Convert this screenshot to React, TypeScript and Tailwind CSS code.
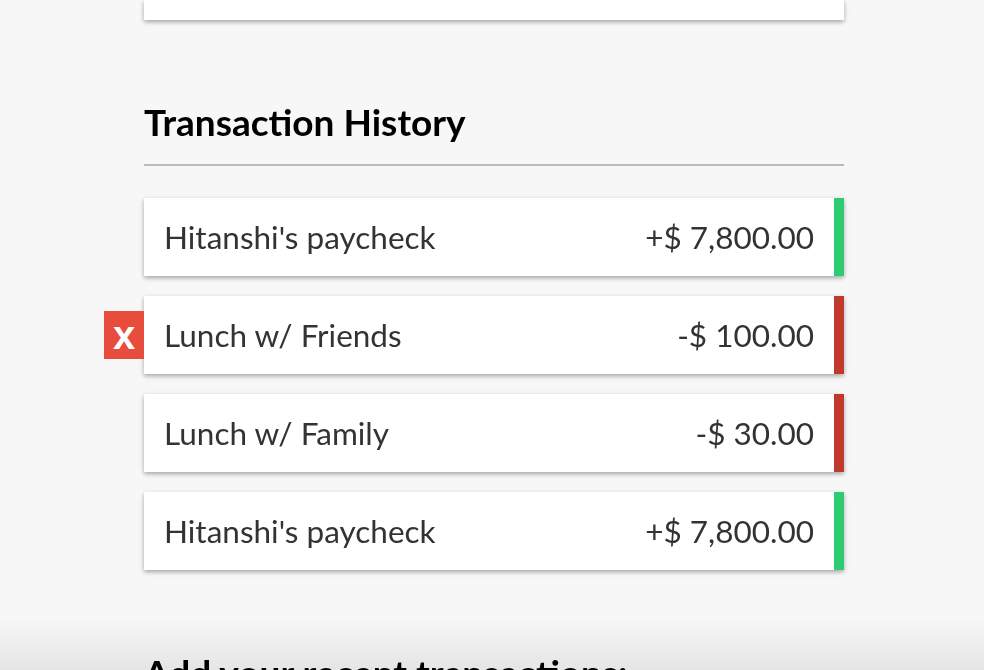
import React from "react";

interface Transaction {
  id: number;
  text: string;
  amount: number;
}

const transactions: Transaction[] = [
  { id: 1, text: "Hitanshi's paycheck", amount: 7800 },
  { id: 2, text: "Lunch w/ Friends", amount: -100 },
  { id: 3, text: "Lunch w/ Family", amount: -30 },
  { id: 4, text: "Hitanshi's paycheck", amount: 7800 },
];

function formatAmount(amount: number) {
  const sign = amount < 0 ? "-" : "+";
  const abs = Math.abs(amount).toLocaleString("en-US", {
    minimumFractionDigits: 2,
    maximumFractionDigits: 2,
  });
  return `${sign}$ ${abs}`;
}

export default function App() {
  return (
    <div
      className="relative min-h-screen bg-[#f7f7f7] overflow-hidden"
      style={{ fontFamily: "Lato, 'Open Sans', sans-serif" }}
    >
      {/* sombra inferior del viewport */}
      <div className="fixed bottom-0 left-0 right-0 h-[52px] bg-gradient-to-b from-transparent to-black/[0.07] pointer-events-none" />

      <div className="relative w-[700px] ml-[144px]">
        {/* tarjeta de ingresos/gastos (cortada arriba) */}
        <div className="h-5 bg-white shadow-[0_2px_6px_rgba(0,0,0,0.12),0_2px_4px_rgba(0,0,0,0.24)]" />

        <h3 className="mt-[79px] pb-5 border-b-2 border-[#bbbbbb] text-[37px] leading-[45px] font-bold text-black">
          Transaction History
        </h3>

        <ul className="mt-8 flex flex-col gap-5">
          {transactions.map((t) => (
            <li
              key={t.id}
              className={`group relative flex justify-between bg-white p-5 text-[31.5px] leading-[38px] text-[#333] shadow-[0_2px_6px_rgba(0,0,0,0.12),0_2px_4px_rgba(0,0,0,0.24)] border-r-[10px] ${
                t.amount < 0 ? "border-[#c0392b]" : "border-[#2ecc71]"
              }`}
            >
              <span>{t.text}</span>
              <span>{formatAmount(t.amount)}</span>
              {t.id === 2 && (
                <button
                  className="absolute top-1/2 left-0 -translate-x-full -translate-y-1/2 bg-[#e74c3c] text-white text-[40px] leading-[40px] font-bold py-1 w-10 text-center"
                  style={{ fontFamily: "'Liberation Sans', Arial, sans-serif" }}
                >
                  x
                </button>
              )}
            </li>
          ))}
        </ul>

        <h3 className="mt-[80px] text-[37px] leading-[45px] font-bold text-black">
          Add your recent transactions:
        </h3>
        <div className="h-40" />
      </div>
    </div>
  );
}
